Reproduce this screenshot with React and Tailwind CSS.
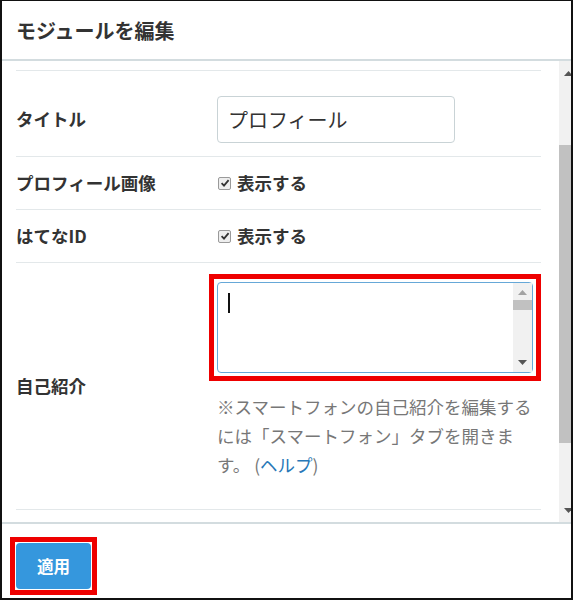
import React from 'react'

const jp = { fontFamily: '"Noto Sans CJK JP", "Noto Sans", sans-serif' }

const Check = () => (
  <span className="inline-flex h-[13px] w-[13px] items-center justify-center rounded-[2px] border border-[#9a9a9a] bg-[#eeeeee]">
    <svg width="10" height="10" viewBox="0 0 10 10">
      <path d="M1.6 5.2 L4 7.6 L8.6 2.2" fill="none" stroke="#333" strokeWidth="1.8" />
    </svg>
  </span>
)

const Row = ({ label, children, className = '' }) => (
  <div className={`flex border-b border-[#e3e8ea] ${className}`}>
    <div className="flex w-[201px] shrink-0 items-center text-[17.5px] font-bold text-[#333]">{label}</div>
    <div className="flex-1">{children}</div>
  </div>
)

const ArrowUp = ({ color = '#555' }) => (
  <svg width="9" height="5" viewBox="0 0 9 5"><path d="M0 5 L4.5 0 L9 5 Z" fill={color} /></svg>
)
const ArrowDown = ({ color = '#555' }) => (
  <svg width="9" height="5" viewBox="0 0 9 5"><path d="M0 0 L4.5 5 L9 0 Z" fill={color} /></svg>
)

export default function App() {
  return (
    <div className="h-[600px] w-[573px] bg-white" style={jp}>
      <div className="flex h-full flex-col border-[#111] border-t border-l-[2px] border-r-[2px] border-b-[2px]">
        {/* header */}
        <div className="flex h-[60px] shrink-0 items-center border-b-[2px] border-[#d3dcdf] pl-[14px] pt-[2px]">
          <h1 className="text-[20px] font-bold text-[#333]">モジュールを編集</h1>
        </div>

        {/* body */}
        <div className="flex h-[461px] shrink-0 overflow-hidden">
          <div className="flex-1 pl-[14px] pr-[18px] pt-[9px]">
            <div className="border-b border-[#e3e8ea]" />
            <Row label={<span className="pt-[12px]">タイトル</span>} className="h-[86px]">
              <div className="pt-[25px]">
                <div className="flex h-[47px] w-[238px] items-center rounded-[4px] border border-[#c9d3d6] pl-[10px] text-[20px] text-[#333]">
                  プロフィール
                </div>
              </div>
            </Row>
            <Row label="プロフィール画像" className="h-[53px]">
              <div className="flex h-full items-center gap-[6px] pl-[1px] text-[17.5px] font-bold text-[#333]">
                <Check />
                表示する
              </div>
            </Row>
            <Row label="はてなID" className="h-[53px]">
              <div className="flex h-full items-center gap-[6px] pl-[1px] text-[17.5px] font-bold text-[#333]">
                <Check />
                表示する
              </div>
            </Row>
            <Row label="自己紹介" className="h-[247px]">
              <div className="pt-[11px]">
                <div className="-ml-[8px] w-[332px] border-[5px] border-[#ee0000] p-[3px]">
                  <div className="flex h-[91px] rounded-[4px] border border-[#66a8d8] bg-white">
                    <div className="flex-1 pl-[10px] pt-[10px]">
                      <div className="h-[20px] w-[2px] bg-[#111]" />
                    </div>
                    <div className="flex w-[19px] flex-col items-center bg-[#f1f1f1] py-[7px]">
                      <ArrowUp color="#a3a3a3" />
                      <div className="mt-[5px] h-[10px] w-[19px] bg-[#c1c1c1]" />
                      <div className="flex-1" />
                      <ArrowDown />
                    </div>
                  </div>
                </div>
                <p className="mt-[11px] w-[318px] text-[17.5px] leading-[29px] text-[#777]">
                  ※スマートフォンの自己紹介を編集するには「スマートフォン」タブを開きます。 (<span className="text-[#2878b8]">ヘルプ</span>)
                </p>
              </div>
            </Row>
          </div>

          {/* scrollbar */}
          <div className="flex w-[18px] shrink-0 flex-col bg-[#f1f1f1]">
            <div className="flex h-[17px] items-end justify-center pb-[2px]">
              <ArrowUp />
            </div>
            <div className="mt-[67px] h-[298px] bg-[#c1c1c1]" />
            <div className="flex-1" />
            <div className="flex h-[17px] items-start justify-center pt-[3px]">
              <ArrowDown />
            </div>
          </div>
        </div>

        {/* footer */}
        <div className="flex flex-1 items-start border-t-[2px] border-[#d3dcdf] pl-[8px] pt-[13px]">
          <div className="border-[5px] border-[#ee0000] p-[1px]">
            <button className="h-[46px] w-[75px] rounded-[4px] bg-[#3597dd] text-[16.5px] font-bold text-white" style={jp}>
              適用
            </button>
          </div>
        </div>
      </div>
    </div>
  )
}
